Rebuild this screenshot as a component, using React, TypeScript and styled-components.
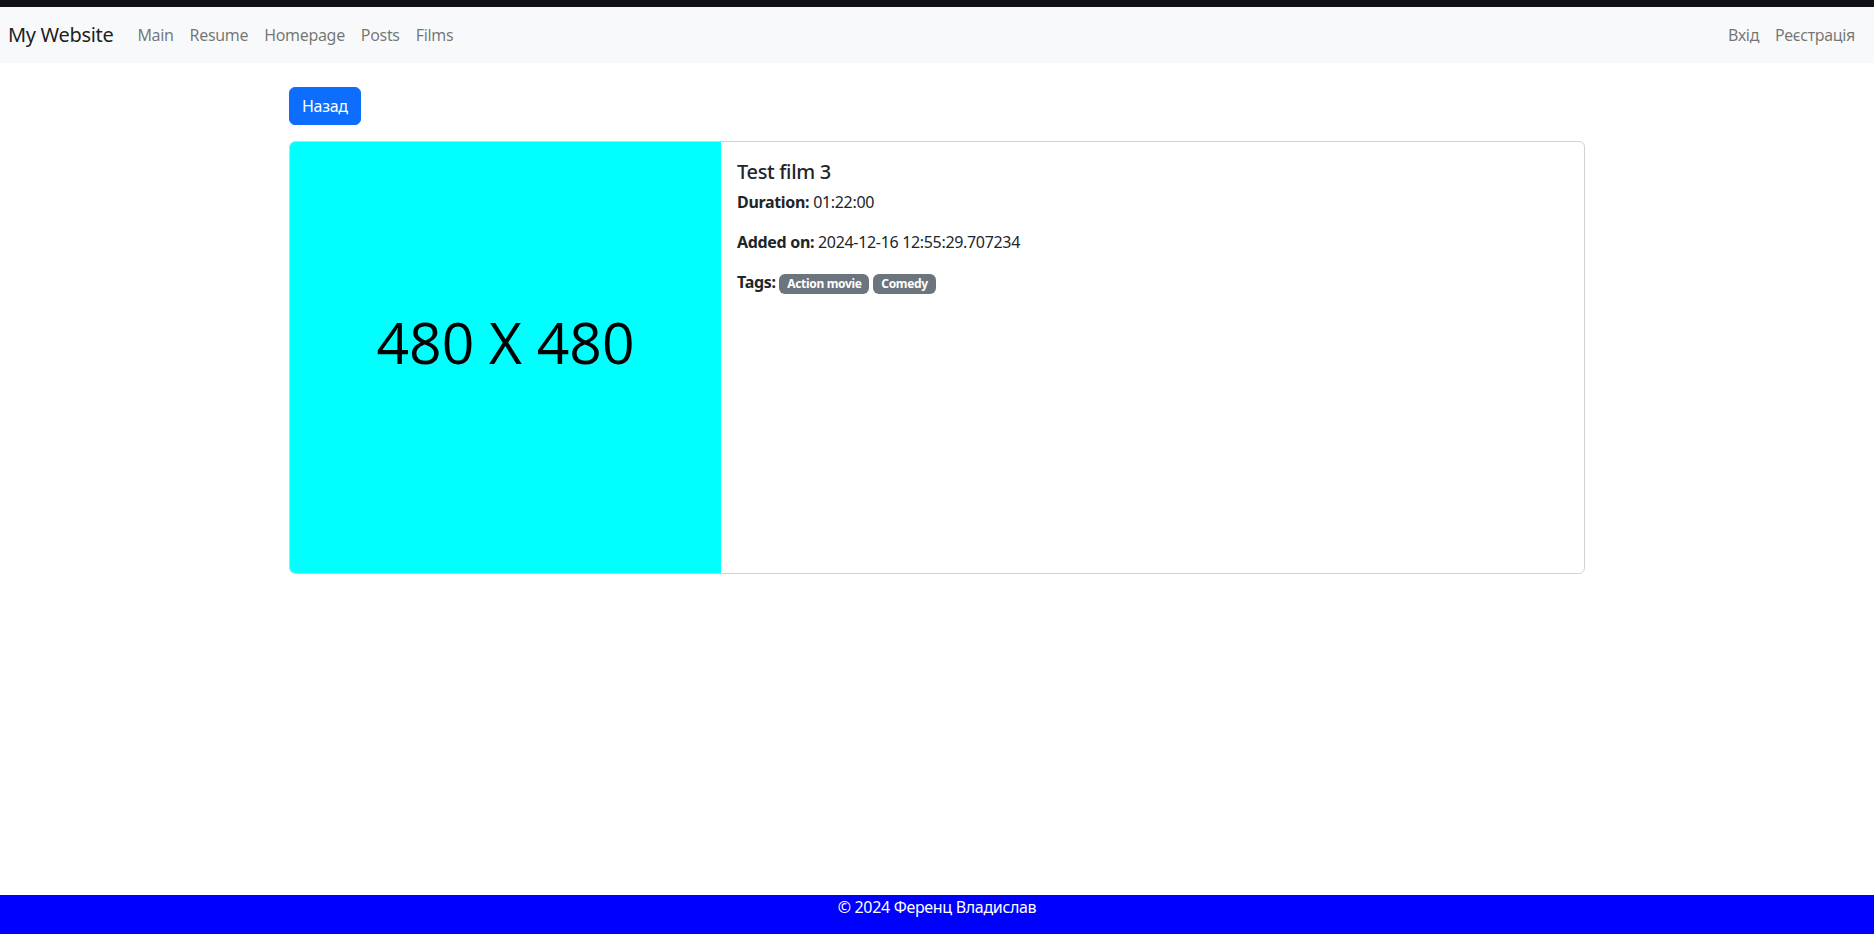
import styled, { createGlobalStyle } from 'styled-components'

const GlobalStyle = createGlobalStyle`
  * {
    box-sizing: border-box;
  }
  html, body {
    margin: 0;
    padding: 0;
  }
  body {
    font-family: "Segoe UI", "Noto Sans", "Open Sans", sans-serif;
    font-size: 16px;
    line-height: 1.5;
    letter-spacing: -0.02em;
    color: #212529;
    background: #fff;
  }
`

const Page = styled.div`
  min-height: 100vh;
  display: flex;
  flex-direction: column;
`

const TopStrip = styled.div`
  height: 7px;
  background-color: #12111a;
`

const Navbar = styled.nav`
  display: flex;
  align-items: center;
  justify-content: space-between;
  height: 56px;
  padding: 0 11px 0 8px;
  background-color: #f8f9fa;
`

const NavGroup = styled.div`
  display: flex;
  align-items: center;
`

const Brand = styled.a`
  font-size: 20px;
  color: rgba(0, 0, 0, 0.9);
  text-decoration: none;
  margin-right: 16px;
  padding: 5px 0;
`

const NavLink = styled.a`
  color: rgba(0, 0, 0, 0.55);
  text-decoration: none;
  padding: 8px;
`

const Main = styled.main`
  flex: 1;
  width: 100%;
  max-width: 1320px;
  margin: 0 auto;
  padding: 24px 12px 0;
`

const BackButton = styled.button`
  display: inline-block;
  font-family: inherit;
  font-size: 16px;
  line-height: 1.5;
  letter-spacing: inherit;
  color: #fff;
  background-color: #0d6efd;
  border: 1px solid #0d6efd;
  border-radius: 6px;
  padding: 6px 12px;
  margin-bottom: 16px;
  cursor: pointer;
`

const Card = styled.div`
  display: flex;
  border: 1px solid rgba(0, 0, 0, 0.175);
  border-radius: 6px;
  overflow: hidden;
`

const Poster = styled.div`
  flex: 0 0 431px;
  height: 431px;
  display: flex;
  align-items: center;
  justify-content: center;
  padding-bottom: 30px;
  background-color: #00ffff;
  color: #000;
  font-family: "Segoe UI", "Open Sans", sans-serif;
  font-size: 57px;
  letter-spacing: 0;
`

const CardBody = styled.div`
  flex: 1;
  padding: 16px;
`

const Title = styled.h5`
  margin: 0 0 6px;
  padding-top: 2px;
  font-size: 20px;
  font-weight: 500;
  line-height: 1.2;
`

const Info = styled.p`
  margin: 0 0 16px;
`

const Badge = styled.span`
  display: inline-block;
  padding: 4px 7.8px;
  margin-right: 4px;
  font-size: 12px;
  font-weight: 700;
  line-height: 1;
  color: #fff;
  background-color: #6c757d;
  border-radius: 6px;
  vertical-align: baseline;
`

const Footer = styled.footer`
  height: 39px;
  background-color: #0000ff;
  color: #fff;
  text-align: center;
`

interface Film {
  title: string
  duration: string
  addedOn: string
  tags: string[]
}

const film: Film = {
  title: 'Test film 3',
  duration: '01:22:00',
  addedOn: '2024-12-16 12:55:29.707234',
  tags: ['Action movie', 'Comedy'],
}

export default function App() {
  return (
    <Page>
      <GlobalStyle />
      <TopStrip />
      <Navbar>
        <NavGroup>
          <Brand href="#">My Website</Brand>
          <NavLink href="#">Main</NavLink>
          <NavLink href="#">Resume</NavLink>
          <NavLink href="#">Homepage</NavLink>
          <NavLink href="#">Posts</NavLink>
          <NavLink href="#">Films</NavLink>
        </NavGroup>
        <NavGroup>
          <NavLink href="#">Вхід</NavLink>
          <NavLink href="#">Реєстрація</NavLink>
        </NavGroup>
      </Navbar>
      <Main>
        <BackButton>Назад</BackButton>
        <Card>
          <Poster>480 X 480</Poster>
          <CardBody>
            <Title>{film.title}</Title>
            <Info>
              <strong>Duration:</strong> {film.duration}
            </Info>
            <Info>
              <strong>Added on:</strong> {film.addedOn}
            </Info>
            <Info>
              <strong>Tags:</strong>{' '}
              {film.tags.map((tag) => (
                <Badge key={tag}>{tag}</Badge>
              ))}
            </Info>
          </CardBody>
        </Card>
      </Main>
      <Footer>© 2024 Ференц Владислав</Footer>
    </Page>
  )
}
